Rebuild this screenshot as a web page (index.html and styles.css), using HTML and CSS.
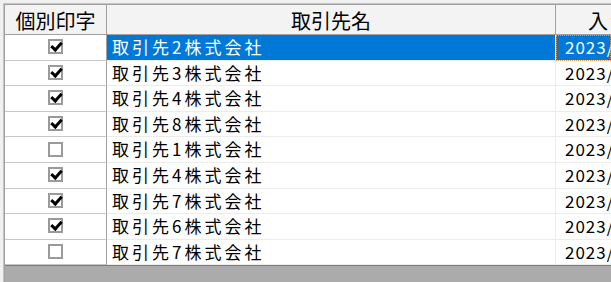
FILE: index.html
```html
<!DOCTYPE html>
<html>

<head>
    <meta charset="utf-8" />
    <title>個別印字一覧</title>
    <link rel="stylesheet" href="styles.css">
</head>

<body>
    <div class="frame">
        <div class="grid">
            <div class="head">
                <div class="hcell c1">個別印字</div>
                <div class="hcell c2">取引先名</div>
                <div class="hcell c3">入金</div>
            </div>
            <div class="body">
                <div class="row selected">
                    <div class="cell c1"><span class="check on"></span></div>
                    <div class="cell c2">取引先2株式会社</div>
                    <div class="cell c3">2023/</div>
                </div>
                <div class="row">
                    <div class="cell c1"><span class="check on"></span></div>
                    <div class="cell c2">取引先3株式会社</div>
                    <div class="cell c3">2023/</div>
                </div>
                <div class="row">
                    <div class="cell c1"><span class="check on"></span></div>
                    <div class="cell c2">取引先4株式会社</div>
                    <div class="cell c3">2023/</div>
                </div>
                <div class="row">
                    <div class="cell c1"><span class="check on"></span></div>
                    <div class="cell c2">取引先8株式会社</div>
                    <div class="cell c3">2023/</div>
                </div>
                <div class="row">
                    <div class="cell c1"><span class="check"></span></div>
                    <div class="cell c2">取引先1株式会社</div>
                    <div class="cell c3">2023/</div>
                </div>
                <div class="row">
                    <div class="cell c1"><span class="check on"></span></div>
                    <div class="cell c2">取引先4株式会社</div>
                    <div class="cell c3">2023/</div>
                </div>
                <div class="row">
                    <div class="cell c1"><span class="check on"></span></div>
                    <div class="cell c2">取引先7株式会社</div>
                    <div class="cell c3">2023/</div>
                </div>
                <div class="row">
                    <div class="cell c1"><span class="check on"></span></div>
                    <div class="cell c2">取引先6株式会社</div>
                    <div class="cell c3">2023/</div>
                </div>
                <div class="row">
                    <div class="cell c1"><span class="check"></span></div>
                    <div class="cell c2">取引先7株式会社</div>
                    <div class="cell c3">2023/</div>
                </div>
            </div>
            <div class="rest"></div>
        </div>
    </div>
</body>

</html>
```

FILE: styles.css
```css
* {
    margin: 0;
    padding: 0;
    box-sizing: border-box;
}

html,
body {
    height: 100%;
    overflow: hidden;
}

body {
    background: #f0f0f0;
    font-family: "Noto Sans CJK JP", "DejaVu Sans", sans-serif;
    color: #000;
}

/* 外枠 */
.frame {
    height: 100%;
    margin-left: 3px;
    padding-top: 3px;
    width: 608px;
}

.grid {
    display: flex;
    flex-direction: column;
    height: 100%;
    border-top: 1px solid #c4c4c4;
    border-left: 1px solid #c4c4c4;
    box-shadow: inset 1px 1px 0 #a0a0a0;
    padding: 1px 0 0 1px;
}

/* ヘッダー */
.head {
    display: flex;
    height: 30px;
    background: #f3f3f3;
    border-bottom: 1px solid #a0a0a0;
}

.hcell {
    font-size: 20px;
    line-height: 30px;
    padding-top: 1px;
    text-align: center;
    border-right: 1px solid #a0a0a0;
    white-space: nowrap;
    overflow: hidden;
}

.c1 {
    width: 102px;
    flex: none;
}

.c2 {
    width: 449px;
    flex: none;
}

.c3 {
    flex: 1;
}

.hcell.c3 {
    text-align: left;
    padding-left: 32px;
    letter-spacing: 2px;
    border-right: none;
}

/* 明細 */
.body {
    background: #fff;
}

.row {
    display: flex;
    height: 25.6px;
}

.cell {
    font-size: 17px;
    line-height: 23px;
    letter-spacing: 3px;
    white-space: nowrap;
    overflow: hidden;
    border-bottom: 1px solid #ececec;
    border-right: 1px solid #ececec;
}

.cell.c1 {
    display: flex;
    align-items: center;
    justify-content: center;
    border-right-color: #a0a0a0;
    border-bottom-color: #c8c8c8;
    padding-bottom: 1px;
}

.cell.c2 {
    padding-left: 5px;
}

.cell.c3 {
    padding-left: 9px;
    letter-spacing: 1px;
    border-right: none;
}

.row.selected .c2,
.row.selected .c3 {
    background: #0078d7;
    color: #fff;
}

.row.selected .c3 {
    outline: 1px dotted #e89a4c;
    outline-offset: -1px;
}

/* チェックボックス */
.check {
    display: block;
    width: 15px;
    height: 15px;
    border: 2px solid #9a9a9a;
    background: #fff;
    position: relative;
}

.check.on::after {
    content: "";
    position: absolute;
    left: 3px;
    top: -1px;
    width: 4px;
    height: 8px;
    border-right: 3px solid #000;
    border-bottom: 3px solid #000;
    transform: rotate(42deg);
}

/* 空き領域 */
.rest {
    flex: 1;
    background: #ababab;
    border-top: 1px solid #7c7c7c;
}
```
